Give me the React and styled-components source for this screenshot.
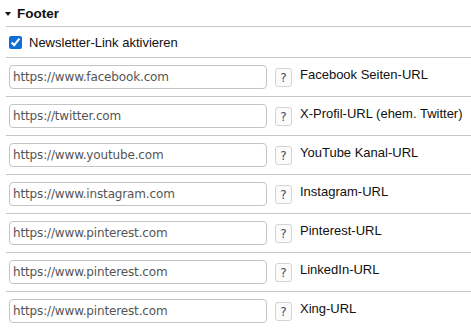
import React from 'react'
import styled, { createGlobalStyle } from 'styled-components'

const GlobalStyle = createGlobalStyle`
    body {
        margin: 0;
        background: #fff;
        font-family: "Liberation Sans", Arial, sans-serif;
    }
`

const fields = [
    { value: 'https://www.facebook.com', label: 'Facebook Seiten-URL' },
    { value: 'https://twitter.com', label: 'X-Profil-URL (ehem. Twitter)' },
    { value: 'https://www.youtube.com', label: 'YouTube Kanal-URL' },
    { value: 'https://www.instagram.com', label: 'Instagram-URL' },
    { value: 'https://www.pinterest.com', label: 'Pinterest-URL' },
    { value: 'https://www.pinterest.com', label: 'LinkedIn-URL' },
    { value: 'https://www.pinterest.com', label: 'Xing-URL' },
]

function App() {
    return (
        <Container>
            <GlobalStyle />
            <Header>
                <Caret />
                Footer
            </Header>

            <CheckRow>
                <Checkbox type="checkbox" defaultChecked />
                Newsletter-Link aktivieren
            </CheckRow>

            {fields.map((f, i) => (
                <FieldRow key={i}>
                    <UrlInput defaultValue={f.value} />
                    <HelpButton>?</HelpButton>
                    <Label>{f.label}</Label>
                </FieldRow>
            ))}
        </Container>
    )
}

export default App

const Container = styled.div`
    width: 465px;
    margin-left: 6px;
`

const Header = styled.div`
    display: flex;
    align-items: center;
    height: 26px;
    border-bottom: 1px solid #c6c6c6;
    font-size: 13.5px;
    font-weight: bold;
    color: #111;
`

const Caret = styled.span`
    width: 0;
    height: 0;
    margin: 1px 6px 0 -1px;
    border-left: 3.5px solid transparent;
    border-right: 3.5px solid transparent;
    border-top: 4px solid #111;
`

const CheckRow = styled.label`
    display: flex;
    align-items: center;
    height: 30px;
    border-bottom: 1px solid #c6c6c6;
    font-size: 13px;
    color: #111;
`

const Checkbox = styled.input`
    width: 13px;
    height: 13px;
    margin: 1px 7px 0 3px;
    accent-color: #0b6fd6;
`

const FieldRow = styled.div`
    display: flex;
    align-items: flex-start;
    padding: 7px 0 7px 3px;
    border-bottom: 1px solid #c6c6c6;

    &:last-child {
        border-bottom: none;
    }
`

const UrlInput = styled.input`
    box-sizing: border-box;
    width: 258px;
    height: 24px;
    padding: 0 3px;
    border: 1px solid #c4c4c4;
    border-radius: 4px;
    font-family: "DejaVu Sans", Verdana, sans-serif;
    font-size: 12px;
    letter-spacing: -0.15px;
    color: #555;
    outline: none;
`

const HelpButton = styled.button`
    box-sizing: border-box;
    width: 17px;
    height: 19px;
    margin: 3px 8px 0 8px;
    padding: 0;
    border: 1px solid #d4d4d4;
    border-radius: 3px;
    background: #fbfbfb;
    font-family: "DejaVu Sans", Verdana, sans-serif;
    font-size: 12px;
    font-weight: normal;
    color: #34506e;
    line-height: 18px;
    cursor: pointer;
`

const Label = styled.span`
    margin-top: 2px;
    font-size: 13px;
    color: #111;
`
